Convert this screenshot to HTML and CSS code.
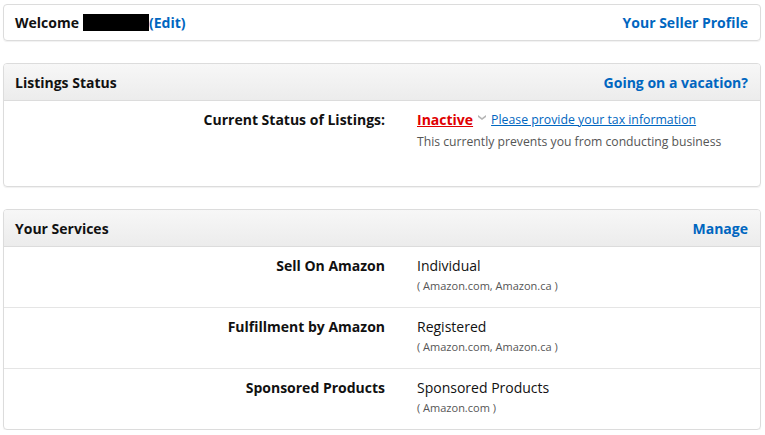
FILE: index.html
```html
<!DOCTYPE html>
<html>
<head>
<meta charset="utf-8">
<link rel="stylesheet" href="styles.css">
</head>
<body>
<div class="page">
  <div class="card welcome">
    <div class="welcome-left"><span class="bold">Welcome</span> <span class="redact"></span><a class="link bold" href="#">(Edit)</a></div>
    <a class="link bold" href="#">Your Seller Profile</a>
  </div>

  <div class="card">
    <div class="card-head">
      <span class="bold">Listings Status</span>
      <a class="link bold" href="#">Going on a vacation?</a>
    </div>
    <div class="status-body">
      <div class="label">Current Status of Listings:</div>
      <div class="value">
        <div class="status-line">
          <a class="inactive" href="#">Inactive</a>
          <svg class="chev" width="8" height="6" viewBox="0 0 8 6"><path d="M0 0 L4 3 L8 0 L8 2 L4 5 L0 2 Z" fill="#b5b5b5"/></svg>
          <a class="tax" href="#">Please provide your tax information</a>
        </div>
        <div class="note">This currently prevents you from conducting business</div>
      </div>
    </div>
  </div>

  <div class="card">
    <div class="card-head">
      <span class="bold">Your Services</span>
      <a class="link bold" href="#">Manage</a>
    </div>
    <div class="row">
      <div class="label">Sell On Amazon</div>
      <div class="value"><div class="main">Individual</div><div class="sub">( Amazon.com, Amazon.ca )</div></div>
    </div>
    <div class="row">
      <div class="label">Fulfillment by Amazon</div>
      <div class="value"><div class="main">Registered</div><div class="sub">( Amazon.com, Amazon.ca )</div></div>
    </div>
    <div class="row">
      <div class="label">Sponsored Products</div>
      <div class="value"><div class="main">Sponsored Products</div><div class="sub">( Amazon.com )</div></div>
    </div>
  </div>
</div>
</body>
</html>
```

FILE: styles.css
```css
html, body {
  margin: 0;
  padding: 0;
  background: #fff;
}
body {
  font-family: "Open Sans", "Noto Sans", Arial, sans-serif;
  font-size: 14px;
  color: #111;
}
.page {
  padding: 4px 4px 0 3px;
  display: flex;
  flex-direction: column;
  gap: 22px;
}
.card {
  border: 1px solid #dcdcdc;
  border-radius: 4px;
  box-shadow: 0 1px 1px rgba(0,0,0,0.06);
  overflow: hidden;
}
.bold { font-weight: 700; }
.link {
  color: #0066c0;
  text-decoration: none;
}
.welcome {
  height: 35px;
  display: flex;
  align-items: center;
  justify-content: space-between;
  padding: 0 12px 0 11px;
}
.welcome-left {
  display: flex;
  align-items: center;
}
.redact {
  display: inline-block;
  width: 66px;
  height: 17px;
  background: #000;
  margin-left: 4px;
}
.card-head {
  height: 36px;
  display: flex;
  align-items: center;
  justify-content: space-between;
  padding: 0 12px 0 11px;
  background: linear-gradient(#f7f7f7, #ececec);
  border-bottom: 1px solid #dcdcdc;
}
.status-body {
  display: grid;
  grid-template-columns: 381px 1fr;
  column-gap: 32px;
  padding: 9px 0 0;
  height: 76px;
}
.label {
  text-align: right;
  font-weight: 700;
}
.status-line {
  display: flex;
  align-items: center;
  gap: 5px;
}
.inactive {
  color: #e00000;
  font-weight: 700;
  text-decoration: underline;
}
.chev {
  margin-top: -3px;
}
.tax {
  color: #0066c0;
  font-size: 12.3px;
  text-decoration: underline;
}
.note {
  color: #555;
  font-size: 12.2px;
  margin-top: 4px;
}
.row {
  display: grid;
  grid-template-columns: 381px 1fr;
  column-gap: 32px;
  height: 61px;
  padding-top: 9px;
  box-sizing: border-box;
  border-top: 1px solid #e5e5e5;
}
.card-head + .row { border-top: none; height: 60px; }
.main {
  font-size: 14px;
  color: #111;
}
.sub {
  font-size: 11px;
  color: #555;
  margin-top: 3px;
}
```
